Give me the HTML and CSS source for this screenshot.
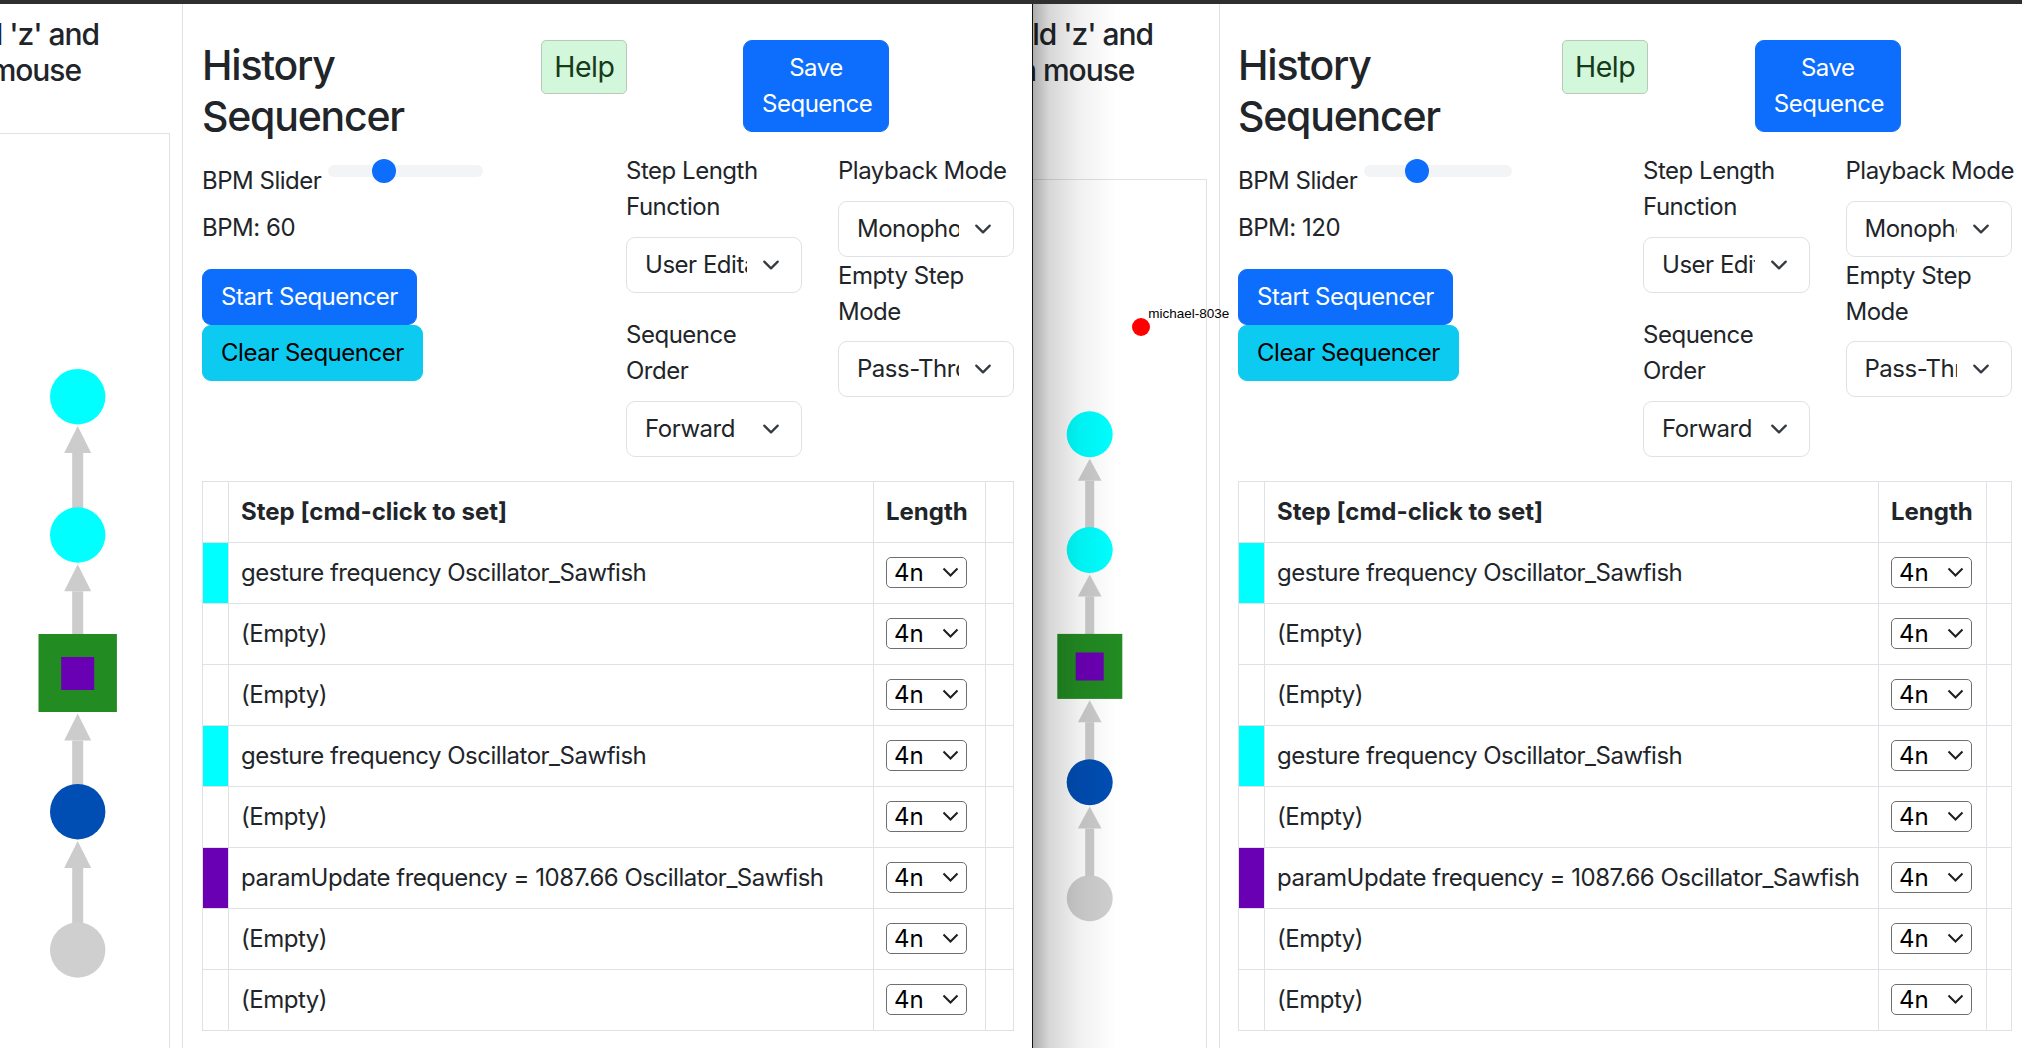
FILE: index.html
```html
<!DOCTYPE html>
<html lang="en">
<head>
<meta charset="utf-8">
<title>History Sequencer</title>
<link rel="stylesheet" href="styles.css">
</head>
<body>
<div class="topbar"></div>
<div class="screen">

  <section class="pane pane-a">
    <aside class="graph-col">
      <div class="hint"><span>Hold 'z' and</span><span class="hint-2">scroll on mouse</span></div>
      <div class="graph-box"></div>
      <svg class="graph" width="182" height="1044" viewBox="0 0 182 1044">
        <g fill="#cccccc">
          <rect x="72.2" y="449" width="11" height="82"/>
          <polygon points="77.7,422 64.2,449 91.2,449"/>
          <rect x="72.2" y="587.3" width="11" height="82"/>
          <polygon points="77.7,560.3 64.2,587.3 91.2,587.3"/>
          <rect x="72.2" y="736.6" width="11" height="71"/>
          <polygon points="77.7,709.6 64.2,736.6 91.2,736.6"/>
          <rect x="72.2" y="864" width="11" height="82"/>
          <polygon points="77.7,837 64.2,864 91.2,864"/>
        </g>
        <circle cx="77.7" cy="392.7" r="27.7" fill="#00ffff"/>
        <circle cx="77.7" cy="531" r="27.7" fill="#00ffff"/>
        <rect x="38.5" y="630" width="78.4" height="78" fill="#228b22"/>
        <rect x="61.2" y="653" width="33" height="33" fill="#6a00b4"/>
        <circle cx="77.7" cy="807.7" r="27.7" fill="#004db3"/>
        <circle cx="77.7" cy="946" r="27.7" fill="#cfcfcf"/>
      </svg>
    </aside>

    <main class="seq">
      <div class="row seq-head">
        <div class="col c-title"><h2>History Sequencer</h2></div>
        <div class="col c-help"><button class="btn-help">Help</button></div>
        <div class="col c-save"><button class="btn btn-primary btn-save">Save Sequence</button></div>
      </div>

      <div class="row seq-controls">
        <div class="col c-half">
          <div class="bpm-row">
            <span class="bpm-label">BPM Slider</span>
            <div class="range"><div class="range-track"></div><div class="range-thumb"></div></div>
          </div>
          <p class="bpm-value">BPM: 60</p>
          <div class="btn-stack">
            <button class="btn btn-primary">Start Sequencer</button>
            <button class="btn btn-info">Clear Sequencer</button>
          </div>
        </div>
        <div class="col c-quarter">
          <label class="form-label">Step Length Function</label>
          <div class="form-select"><span class="sel-text">User Editable</span><svg viewBox="0 0 16 16"><path d="m2 5 6 6 6-6" fill="none" stroke="#343a40" stroke-width="2" stroke-linecap="round" stroke-linejoin="round"/></svg></div>
          <label class="form-label mt-lg">Sequence Order</label>
          <div class="form-select"><span class="sel-text">Forward</span><svg viewBox="0 0 16 16"><path d="m2 5 6 6 6-6" fill="none" stroke="#343a40" stroke-width="2" stroke-linecap="round" stroke-linejoin="round"/></svg></div>
        </div>
        <div class="col c-quarter">
          <label class="form-label one-line">Playback Mode</label>
          <div class="form-select"><span class="sel-text">Monophonic</span><svg viewBox="0 0 16 16"><path d="m2 5 6 6 6-6" fill="none" stroke="#343a40" stroke-width="2" stroke-linecap="round" stroke-linejoin="round"/></svg></div>
          <label class="form-label mt-sm">Empty Step Mode</label>
          <div class="form-select"><span class="sel-text">Pass-Through</span><svg viewBox="0 0 16 16"><path d="m2 5 6 6 6-6" fill="none" stroke="#343a40" stroke-width="2" stroke-linecap="round" stroke-linejoin="round"/></svg></div>
        </div>
      </div>

      <table class="steps">
        <thead>
          <tr><th class="c-color"></th><th>Step [cmd-click to set]</th><th class="c-len">Length</th><th class="c-x"></th></tr>
        </thead>
        <tbody>
          <tr><td class="c-color cyan"></td><td>gesture frequency Oscillator_Sawfish</td><td><span class="len-select">4n<svg viewBox="0 0 17 10"><polyline points="1.5,1.5 8.5,8.5 15.5,1.5" fill="none" stroke="#1e1e1e" stroke-width="2"/></svg></span></td><td></td></tr>
          <tr><td class="c-color"></td><td>(Empty)</td><td><span class="len-select">4n<svg viewBox="0 0 17 10"><polyline points="1.5,1.5 8.5,8.5 15.5,1.5" fill="none" stroke="#1e1e1e" stroke-width="2"/></svg></span></td><td></td></tr>
          <tr><td class="c-color"></td><td>(Empty)</td><td><span class="len-select">4n<svg viewBox="0 0 17 10"><polyline points="1.5,1.5 8.5,8.5 15.5,1.5" fill="none" stroke="#1e1e1e" stroke-width="2"/></svg></span></td><td></td></tr>
          <tr><td class="c-color cyan"></td><td>gesture frequency Oscillator_Sawfish</td><td><span class="len-select">4n<svg viewBox="0 0 17 10"><polyline points="1.5,1.5 8.5,8.5 15.5,1.5" fill="none" stroke="#1e1e1e" stroke-width="2"/></svg></span></td><td></td></tr>
          <tr><td class="c-color"></td><td>(Empty)</td><td><span class="len-select">4n<svg viewBox="0 0 17 10"><polyline points="1.5,1.5 8.5,8.5 15.5,1.5" fill="none" stroke="#1e1e1e" stroke-width="2"/></svg></span></td><td></td></tr>
          <tr><td class="c-color purple"></td><td>paramUpdate frequency = 1087.66 Oscillator_Sawfish</td><td><span class="len-select">4n<svg viewBox="0 0 17 10"><polyline points="1.5,1.5 8.5,8.5 15.5,1.5" fill="none" stroke="#1e1e1e" stroke-width="2"/></svg></span></td><td></td></tr>
          <tr><td class="c-color"></td><td>(Empty)</td><td><span class="len-select">4n<svg viewBox="0 0 17 10"><polyline points="1.5,1.5 8.5,8.5 15.5,1.5" fill="none" stroke="#1e1e1e" stroke-width="2"/></svg></span></td><td></td></tr>
          <tr><td class="c-color"></td><td>(Empty)</td><td><span class="len-select">4n<svg viewBox="0 0 17 10"><polyline points="1.5,1.5 8.5,8.5 15.5,1.5" fill="none" stroke="#1e1e1e" stroke-width="2"/></svg></span></td><td></td></tr>
        </tbody>
      </table>
    </main>
  </section>

  <section class="pane pane-b">
    <aside class="graph-col">
      <div class="hint"><span>Hold 'z' and</span><span class="hint-2">scroll on mouse</span></div>
      <div class="graph-box"></div>
      <svg class="graph" width="186" height="1044" viewBox="0 0 186 1044">
        <g fill="#cccccc">
          <rect x="52.2" y="476.7" width="9" height="69.3"/>
          <polygon points="56.7,454.7 44.85,476.7 68.55,476.7"/>
          <rect x="52.2" y="592.4" width="9" height="70"/>
          <polygon points="56.7,570.4 44.85,592.4 68.55,592.4"/>
          <rect x="52.2" y="718.2" width="9" height="60"/>
          <polygon points="56.7,696.2 44.85,718.2 68.55,718.2"/>
          <rect x="52.2" y="824.6" width="9" height="70"/>
          <polygon points="56.7,802.6 44.85,824.6 68.55,824.6"/>
        </g>
        <circle cx="56.7" cy="430.3" r="23" fill="#00ffff"/>
        <circle cx="56.7" cy="546" r="23" fill="#00ffff"/>
        <rect x="24.3" y="629.9" width="65" height="65" fill="#228b22"/>
        <rect x="42.7" y="648.5" width="28" height="28" fill="#6a00b4"/>
        <circle cx="56.7" cy="778.2" r="23" fill="#004db3"/>
        <circle cx="56.7" cy="894.3" r="23" fill="#cfcfcf"/>
        <circle cx="108" cy="323" r="9" fill="#ff0000"/>
        <text x="115.3" y="314" class="node-label">michael-803e</text>
      </svg>
    </aside>

    <main class="seq">
      <div class="row seq-head">
        <div class="col c-title"><h2>History Sequencer</h2></div>
        <div class="col c-help"><button class="btn-help">Help</button></div>
        <div class="col c-save"><button class="btn btn-primary btn-save">Save Sequence</button></div>
      </div>

      <div class="row seq-controls">
        <div class="col c-half">
          <div class="bpm-row">
            <span class="bpm-label">BPM Slider</span>
            <div class="range"><div class="range-track"></div><div class="range-thumb"></div></div>
          </div>
          <p class="bpm-value">BPM: 120</p>
          <div class="btn-stack">
            <button class="btn btn-primary">Start Sequencer</button>
            <button class="btn btn-info">Clear Sequencer</button>
          </div>
        </div>
        <div class="col c-quarter">
          <label class="form-label">Step Length Function</label>
          <div class="form-select"><span class="sel-text">User Editable</span><svg viewBox="0 0 16 16"><path d="m2 5 6 6 6-6" fill="none" stroke="#343a40" stroke-width="2" stroke-linecap="round" stroke-linejoin="round"/></svg></div>
          <label class="form-label mt-lg">Sequence Order</label>
          <div class="form-select"><span class="sel-text">Forward</span><svg viewBox="0 0 16 16"><path d="m2 5 6 6 6-6" fill="none" stroke="#343a40" stroke-width="2" stroke-linecap="round" stroke-linejoin="round"/></svg></div>
        </div>
        <div class="col c-quarter">
          <label class="form-label one-line">Playback Mode</label>
          <div class="form-select"><span class="sel-text">Monophonic</span><svg viewBox="0 0 16 16"><path d="m2 5 6 6 6-6" fill="none" stroke="#343a40" stroke-width="2" stroke-linecap="round" stroke-linejoin="round"/></svg></div>
          <label class="form-label mt-sm">Empty Step Mode</label>
          <div class="form-select"><span class="sel-text">Pass-Through</span><svg viewBox="0 0 16 16"><path d="m2 5 6 6 6-6" fill="none" stroke="#343a40" stroke-width="2" stroke-linecap="round" stroke-linejoin="round"/></svg></div>
        </div>
      </div>

      <table class="steps">
        <thead>
          <tr><th class="c-color"></th><th>Step [cmd-click to set]</th><th class="c-len">Length</th><th class="c-x"></th></tr>
        </thead>
        <tbody>
          <tr><td class="c-color cyan"></td><td>gesture frequency Oscillator_Sawfish</td><td><span class="len-select">4n<svg viewBox="0 0 17 10"><polyline points="1.5,1.5 8.5,8.5 15.5,1.5" fill="none" stroke="#1e1e1e" stroke-width="2"/></svg></span></td><td></td></tr>
          <tr><td class="c-color"></td><td>(Empty)</td><td><span class="len-select">4n<svg viewBox="0 0 17 10"><polyline points="1.5,1.5 8.5,8.5 15.5,1.5" fill="none" stroke="#1e1e1e" stroke-width="2"/></svg></span></td><td></td></tr>
          <tr><td class="c-color"></td><td>(Empty)</td><td><span class="len-select">4n<svg viewBox="0 0 17 10"><polyline points="1.5,1.5 8.5,8.5 15.5,1.5" fill="none" stroke="#1e1e1e" stroke-width="2"/></svg></span></td><td></td></tr>
          <tr><td class="c-color cyan"></td><td>gesture frequency Oscillator_Sawfish</td><td><span class="len-select">4n<svg viewBox="0 0 17 10"><polyline points="1.5,1.5 8.5,8.5 15.5,1.5" fill="none" stroke="#1e1e1e" stroke-width="2"/></svg></span></td><td></td></tr>
          <tr><td class="c-color"></td><td>(Empty)</td><td><span class="len-select">4n<svg viewBox="0 0 17 10"><polyline points="1.5,1.5 8.5,8.5 15.5,1.5" fill="none" stroke="#1e1e1e" stroke-width="2"/></svg></span></td><td></td></tr>
          <tr><td class="c-color purple"></td><td>paramUpdate frequency = 1087.66 Oscillator_Sawfish</td><td><span class="len-select">4n<svg viewBox="0 0 17 10"><polyline points="1.5,1.5 8.5,8.5 15.5,1.5" fill="none" stroke="#1e1e1e" stroke-width="2"/></svg></span></td><td></td></tr>
          <tr><td class="c-color"></td><td>(Empty)</td><td><span class="len-select">4n<svg viewBox="0 0 17 10"><polyline points="1.5,1.5 8.5,8.5 15.5,1.5" fill="none" stroke="#1e1e1e" stroke-width="2"/></svg></span></td><td></td></tr>
          <tr><td class="c-color"></td><td>(Empty)</td><td><span class="len-select">4n<svg viewBox="0 0 17 10"><polyline points="1.5,1.5 8.5,8.5 15.5,1.5" fill="none" stroke="#1e1e1e" stroke-width="2"/></svg></span></td><td></td></tr>
        </tbody>
      </table>
    </main>
  </section>

</div>
</body>
</html>
```

FILE: styles.css
```css
* { box-sizing: border-box; }

html, body {
  margin: 0;
  padding: 0;
}

body {
  width: 2022px;
  height: 1048px;
  overflow: hidden;
  background: #fff;
  color: #212529;
  font-family: Inter, "Noto Sans", "Liberation Sans", sans-serif;
  font-size: 24px;
  line-height: 36px;
  letter-spacing: -0.02em;
}

.topbar {
  height: 4px;
  background: #2f2f2f;
}

.screen {
  display: flex;
  height: 1044px;
  overflow: hidden;
}

.pane {
  position: relative;
  display: flex;
  flex-shrink: 0;
  height: 100%;
}

.pane-a { width: 1032px; }

.pane-b {
  width: 998px;
  border-left: 1px solid #111;
}

.pane-b::after {
  content: "";
  position: absolute;
  top: 0;
  bottom: 0;
  left: 0;
  width: 84px;
  background: linear-gradient(90deg, rgba(0,0,0,0.32) 0, rgba(0,0,0,0.16) 16px, rgba(0,0,0,0.06) 46px, rgba(0,0,0,0) 84px);
  pointer-events: none;
  z-index: 5;
}

/* ---------- graph column ---------- */
.graph-col {
  position: relative;
  display: flex;
  flex-direction: column;
  flex: 0 0 auto;
  border-right: 1px solid #dee2e6;
}

.pane-a .graph-col { width: 183px; }
.pane-b .graph-col { width: 187px; }

.hint {
  display: flex;
  flex-direction: column;
  align-items: flex-end;
  overflow: hidden;
  margin-top: 12px;
  font-size: 30px;
  line-height: 36px;
  font-weight: 500;
  letter-spacing: -0.035em;
  white-space: nowrap;
}

.pane-a .hint { width: 99px; }
.pane-a .hint-2 { margin-right: 18px; }
.pane-b .hint { width: 120px; }
.pane-b .hint-2 { margin-right: 18.7px; }

.graph-box {
  flex: 1 1 auto;
  border: 1px solid #dee2e6;
  border-left: 0;
  border-bottom: 0;
  margin-right: 12px;
}

.pane-a .graph-box { margin-top: 45px; }
.pane-b .graph-box { margin-top: 91px; }

.graph {
  position: absolute;
  top: 0;
  left: 0;
  overflow: visible;
  z-index: 2;
}

.node-label {
  font-family: "Liberation Sans", Arial, sans-serif;
  font-size: 13.5px;
  letter-spacing: 0;
  fill: #000;
}

/* ---------- sequencer column ---------- */
.seq {
  flex: 0 0 auto;
  padding: 36px 18px 0 18px;
}

.pane-a .seq { width: 849px; padding-left: 19px; }
.pane-b .seq { width: 810px; }

.row {
  display: flex;
  margin: 0 -18px;
}

.col {
  flex: 0 0 auto;
  padding: 0 18px;
}

.seq-head { align-items: flex-start; }
.c-title { width: 40%; }
.c-help { width: 23.8%; }
.c-save { flex: 1 1 auto; }

h2 {
  margin: 0 0 11px;
  font-size: 41px;
  line-height: 51px;
  font-weight: 500;
  letter-spacing: -0.03em;
}

button {
  font-family: inherit;
  font-size: 24px;
  line-height: 36px;
  letter-spacing: inherit;
  cursor: pointer;
}

.btn-help {
  display: block;
  padding: 8px 12px;
  font-size: 28.5px;
  background: #d2f7da;
  color: #163b1b;
  border: 1px solid #b9cabc;
  border-radius: 5px;
}

.btn {
  display: block;
  padding: 9px 18px;
  border: 1px solid transparent;
  border-radius: 9px;
  text-align: center;
}

.btn-primary {
  background: #0d6efd;
  border-color: #0d6efd;
  color: #fff;
}

.btn-info {
  background: #0dcaf0;
  border-color: #0dcaf0;
  color: #000;
}

.btn-save { width: 146px; }

.seq-controls { align-items: flex-start; }
.c-half { width: 50%; }
.c-quarter { width: 25%; }

.bpm-row {
  display: flex;
  align-items: flex-start;
}

.bpm-label {
  margin-top: 9.5px;
  white-space: nowrap;
}

.range {
  position: relative;
  flex: 0 0 auto;
  width: 40%;
  height: 36px;
  margin-left: 6.7px;
  display: flex;
  align-items: center;
}

.range-track {
  width: 100%;
  height: 12px;
  border-radius: 6px;
  background: #f3f4f6;
}

.range-thumb {
  position: absolute;
  top: 6px;
  left: calc((100% - 24px) * 0.3333);
  width: 24px;
  height: 24px;
  border-radius: 50%;
  background: #0d6efd;
}

.bpm-value {
  margin: 11.3px 0 23.7px;
}

.btn-stack {
  display: flex;
  flex-direction: column;
  align-items: flex-start;
}

.form-label {
  display: block;
  margin-bottom: 11.5px;
}

.form-label.one-line { white-space: nowrap; }
.form-label.mt-lg { margin-top: 24.5px; }
.form-label.mt-sm { margin-top: 1.2px; }

.form-select {
  display: flex;
  align-items: center;
  height: 56px;
  padding: 9px 18px;
  border: 1px solid #dee2e6;
  border-radius: 9px;
  background: #fff;
}

.sel-text {
  flex: 1 1 auto;
  min-width: 0;
  overflow: hidden;
  white-space: nowrap;
}

.form-select svg {
  flex: 0 0 24px;
  width: 24px;
  height: 18px;
  margin-left: 12px;
}

/* ---------- table ---------- */
.steps {
  width: 100%;
  margin-top: 24.2px;
  border-collapse: collapse;
  table-layout: fixed;
  border: 1px solid #dee2e6;
}

.steps th,
.steps td {
  border: 1px solid #dee2e6;
  padding: 12px;
  line-height: 36px;
  text-align: left;
  vertical-align: top;
  white-space: nowrap;
  overflow: hidden;
}

.steps th {
  font-weight: 700;
  letter-spacing: 0;
}

.steps .c-color { width: 26px; }

.pane-a .steps .c-len { width: 112px; }
.pane-a .steps .c-x { width: 28px; }
.pane-b .steps .c-len { width: 108px; }
.pane-b .steps .c-x { width: 25px; }

.steps td.cyan { background: #00ffff; }
.steps td.purple { background: #6a00b4; }

.len-select {
  display: inline-flex;
  align-items: center;
  justify-content: space-between;
  width: 81px;
  height: 31px;
  margin-top: 2px;
  padding: 0 7px 0 7px;
  border: 1px solid #6f6f6f;
  border-radius: 5px;
  background: #fff;
  color: #000;
  line-height: 29px;
  letter-spacing: 0;
  vertical-align: top;
}

.len-select svg {
  width: 17px;
  height: 10px;
}
```
